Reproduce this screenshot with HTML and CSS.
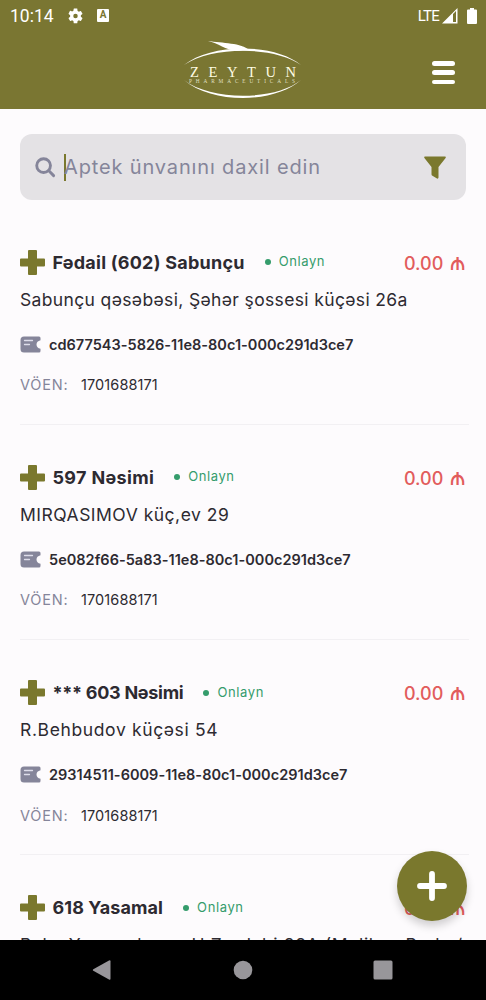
FILE: index.html
```html
<!DOCTYPE html>
<html lang="az">
<head>
<meta charset="utf-8">
<meta name="viewport" content="width=device-width, initial-scale=1">
<title>Zeytun Pharmaceuticals</title>
<link rel="stylesheet" href="styles.css">
</head>
<body>
<svg class="defs" aria-hidden="true">
  <symbol id="cross" viewBox="0 0 25 25"><path d="M9 0h7q1 0 1 1v7.500H24q1 0 1 1v6q0 1-1 1h-7V24q0 1-1 1H9q-1 0-1-1v-7.500H1q-1 0-1-1v-6q0-1 1-1h7V1q0-1 1-1z"/></symbol>
  <symbol id="ticket" viewBox="0 0 21 17"><path fill="#85859a" d="M4 .5h15q1.500 0 1.500 1.500v2.200Q16.500 5.200 16.500 8.500t4 4.300V15q0 1.500-1.500 1.500H4q-3.500 0-3.500-3.500V4Q.5.500 4 .500z"/><path d="M4.500 4.500h8M4.500 8.500h5" stroke="#deddea" stroke-width="1.300" stroke-linecap="round"/></symbol>
</svg>
<div class="screen">
  <header class="header">
    <div class="status">
      <span class="clock">10:14</span>
      <svg class="gear" viewBox="2 2 20 20"><path fill="#fff" fill-rule="evenodd" d="M19.140 12.940a7 7 0 0 0 0-1.880l2.030-1.580a.5.500 0 0 0 .120-.610l-1.920-3.320a.5.500 0 0 0-.590-.220l-2.390.960a7 7 0 0 0-1.620-.940l-.360-2.540A.5.500 0 0 0 13.930 2h-3.840a.5.500 0 0 0-.480.410l-.360 2.540a7 7 0 0 0-1.620.940l-2.390-.960a.5.500 0 0 0-.590.220L2.730 8.870a.5.500 0 0 0 .120.610l2.030 1.580a7 7 0 0 0 0 1.880l-2.030 1.580a.5.500 0 0 0-.120.610l1.920 3.320q.2.350.590.220l2.390-.960q.75.600 1.620.940l.360 2.540q.1.410.480.410h3.840q.4 0 .480-.410l.360-2.540a7 7 0 0 0 1.620-.940l2.390.960q.4.130.590-.220l1.920-3.320a.5.500 0 0 0-.120-.610zM12 15a3 3 0 1 1 0-6 3 3 0 0 1 0 6z"/></svg>
      <span class="badge-a">A</span>
      <span class="lte">LTE</span>
      <svg class="signal" viewBox="0 0 16 16"><path fill="#fff" fill-rule="evenodd" d="M0 15.500L15.500 0v15.500zM11 6v8h3V3z"/></svg>
      <svg class="battery" viewBox="0 0 10 16"><path fill="#fff" d="M3 0h4v1.500h2q1 0 1 1V15q0 1-1 1H1q-1 0-1-1V2.500q0-1 1-1h2z"/></svg>
    </div>
    <svg class="logo" viewBox="0 0 120 60">
      <g fill="#fff"><path d="M1 26C28 4 92 4 118 26 91 7 29 7 1 26zM1 41C28 62 92 62 118 41 91 65 29 65 1 41z" transform="translate(0 -1)"/><path d="M25 1c14 2 34 2 41 9l-13 1C43 10 35 3 25 1z"/></g>
      <g fill="#fffde4" font-family="Liberation Serif, serif"><text x="7" y="37" font-size="14.500" textLength="106">ZEYTUN</text><text x="6" y="43" font-size="5.300" textLength="106" fill-opacity=".8">PHARMACEUTICALS</text></g>
    </svg>
    <button class="menu" aria-label="Menu"><i></i><i></i><i></i></button>
  </header>
  <main class="main">
    <div class="search">
      <svg class="lens" viewBox="0 0 22 22"><g fill="none" stroke="#85859a" stroke-width="3" stroke-linecap="round"><circle cx="9" cy="9" r="7.200"/><path d="M14.500 14.500l5 5"/></g></svg>
      <span class="caret"></span>
      <span class="placeholder">Aptek ünvanını daxil edin</span>
      <svg class="funnel" viewBox="0 0 22 23"><path fill="#7a782d" d="M1 .5h20q1 0 .8 1.200L14.500 11v10.500q-.2 1.500-1.500 1L8 19.500q-.5-.5-.5-1.500v-7L.2 1.700Q0 .5 1 .500z"/></svg>
    </div>
    <article class="card">
      <div class="top"><svg class="cross"><use href="#cross"/></svg><h2 class="name n1">Fədail (602) Sabunçu</h2><span class="online">Onlayn</span><span class="sum">0.00 <b>₼</b></span></div>
      <p class="address a1">Sabunçu qəsəbəsi, Şəhər şossesi küçəsi 26a</p>
      <div class="code"><svg class="ticket"><use href="#ticket"/></svg><span>cd677543-5826-11e8-80c1-000c291d3ce7</span></div>
      <div class="tax"><span>VÖEN:</span><b>1701688171</b></div>
    </article>
    <article class="card">
      <div class="top"><svg class="cross"><use href="#cross"/></svg><h2 class="name n2">597 Nəsimi</h2><span class="online">Onlayn</span><span class="sum">0.00 <b>₼</b></span></div>
      <p class="address a2">MIRQASIMOV küç,ev 29</p>
      <div class="code"><svg class="ticket"><use href="#ticket"/></svg><span>5e082f66-5a83-11e8-80c1-000c291d3ce7</span></div>
      <div class="tax"><span>VÖEN:</span><b>1701688171</b></div>
    </article>
    <article class="card">
      <div class="top"><svg class="cross"><use href="#cross"/></svg><h2 class="name n3">*** 603 Nəsimi</h2><span class="online">Onlayn</span><span class="sum">0.00 <b>₼</b></span></div>
      <p class="address a3">R.Behbudov küçəsi 54</p>
      <div class="code"><svg class="ticket"><use href="#ticket"/></svg><span>29314511-6009-11e8-80c1-000c291d3ce7</span></div>
      <div class="tax"><span>VÖEN:</span><b>1701688171</b></div>
    </article>
    <article class="card">
      <div class="top"><svg class="cross"><use href="#cross"/></svg><h2 class="name n4">618 Yasamal</h2><span class="online">Onlayn</span><span class="sum">0.00 <b>₼</b></span></div>
      <p class="address a4">Bakı, Yasamal ray., H.Zərdabi 88A (Məlikov Parkı /</p>
    </article>
    <button class="fab" aria-label="Add"><svg viewBox="0 0 30 30"><path d="M15 3v24M3 15h24" stroke="#fff" stroke-width="5.800" stroke-linecap="round"/></svg></button>
  </main>
  <nav class="nav">
    <svg viewBox="0 0 20 20"><path fill="#98969a" d="M17 .5q1.500-.8 1.500.700v17.600q0 1.500-1.500.700L1.300 10.800q-1-.8 0-1.600z"/></svg>
    <svg viewBox="0 0 20 20"><circle cx="10" cy="10" r="9.300" fill="#98969a"/></svg>
    <svg viewBox="0 0 20 20"><rect x=".5" y=".5" width="19" height="19" rx="1.500" fill="#98969a"/></svg>
  </nav>
</div>
</body>
</html>
```
FILE: styles.css
```css
* { box-sizing: border-box; }
body { margin: 0; font-family: Inter, "DejaVu Sans", sans-serif; color: #2d2a31; }
.defs { position: absolute; width: 0; height: 0; }
.screen { width: 486px; height: 1000px; display: flex; flex-direction: column; overflow: hidden; background: #fdfbfd; }
.header { position: relative; height: 109px; flex: none; background: #7a7632; color: #fff; display: flex; flex-direction: column; }
.status { height: 31px; display: flex; align-items: center; padding: 0 9px 0 10px; font-family: Roboto, sans-serif; }
.clock { font-size: 17.500px; width: 58px; }
.gear { width: 15px; height: 16px; }
.badge-a { width: 12px; height: 13px; margin-left: 14px; background: #fff; color: #7a7632; border-radius: 1px; font-size: 10px; line-height: 12px; font-weight: 700; text-align: center; }
.lte { margin-left: auto; font-size: 15px; letter-spacing: -.8px; }
.signal { width: 16px; height: 16px; margin-left: 3px; }
.battery { width: 10px; height: 16px; margin-left: 9px; }
.logo { position: absolute; left: 183px; top: 40px; width: 120px; height: 60px; }
.menu { width: 23px; height: 23px; margin: 30px 31px 0 auto; padding: 0; border: 0; background: none; display: flex; flex-direction: column; justify-content: space-between; }
.menu i { height: 4.500px; border-radius: 3px; background: #fff; }
.main { position: relative; height: 831px; flex: none; padding: 25px 17px 0 20px; overflow: hidden; }
.search { width: 446px; height: 66px; margin-bottom: 9.600px; border-radius: 12px; background: #e4e2e5; display: flex; align-items: center; padding: 0 20px 0 15px; }
.lens { width: 21px; height: 21px; }
.caret { width: 2px; height: 27px; margin-left: 7.500px; background: #7a782d; }
.placeholder { margin-left: -1.500px; font-size: 20px; color: #85859a; white-space: nowrap; letter-spacing: .85px; }
.funnel { width: 22px; height: 23px; margin-left: auto; }
.card { height: 215.300px; padding-top: 38px; border-bottom: 1px solid #f2f0f3; }
.top { height: 29px; display: flex; align-items: center; }
.cross { width: 25px; height: 25px; fill: #7a782d; margin-right: 7.500px; }
.name { margin: 0; font-size: 18px; font-weight: 700; white-space: nowrap; }
.n1 { letter-spacing: .24px; }
.n2 { letter-spacing: .34px; }
.n3 { letter-spacing: -.28px; }
.n4 { letter-spacing: .1px; }
.online { display: flex; align-items: center; margin-left: 20px; font-size: 13px; letter-spacing: .6px; color: #359c6c; position: relative; top: -1px; }
.online::before { content: ""; width: 6px; height: 6px; margin-right: 8px; border-radius: 50%; background: #359c6c; position: relative; top: 1px; }
.sum { display: flex; align-items: baseline; gap: 6px; margin-left: auto; margin-right: 3px; font-size: 18px; font-weight: 500; color: #e25c5c; white-space: nowrap; }
.sum b { font-size: 23px; line-height: 22px; font-weight: 400; }
.address { margin: 10px 0 0; height: 26px; line-height: 26px; font-size: 17.500px; white-space: nowrap; }
.a1 { letter-spacing: .36px; }
.a2 { letter-spacing: .5px; }
.a3 { letter-spacing: .63px; }
.a4 { letter-spacing: .62px; }
.code { margin-top: 20.500px; height: 22px; display: flex; align-items: center; font-size: 14.500px; font-weight: 600; white-space: nowrap; letter-spacing: .02px; }
.ticket { width: 21px; height: 17px; margin-right: 8px; }
.tax { margin-top: 19.500px; height: 20px; display: flex; align-items: center; font-size: 14.500px; }
.tax span { width: 61px; color: #85859a; letter-spacing: .8px; }
.tax b { font-weight: 400; letter-spacing: .1px; }
.fab { position: absolute; left: 397px; top: 742px; width: 70px; height: 70px; border: 0; padding: 20px; border-radius: 50%; background: #7a782d; box-shadow: 0 5px 8px rgba(0,0,0,.18); }
.fab svg { display: block; width: 30px; height: 30px; }
.nav { flex: 1; background: #000; display: flex; justify-content: space-between; align-items: center; padding: 0 93px 0 92px; }
.nav svg { width: 20px; height: 20px; }
```
